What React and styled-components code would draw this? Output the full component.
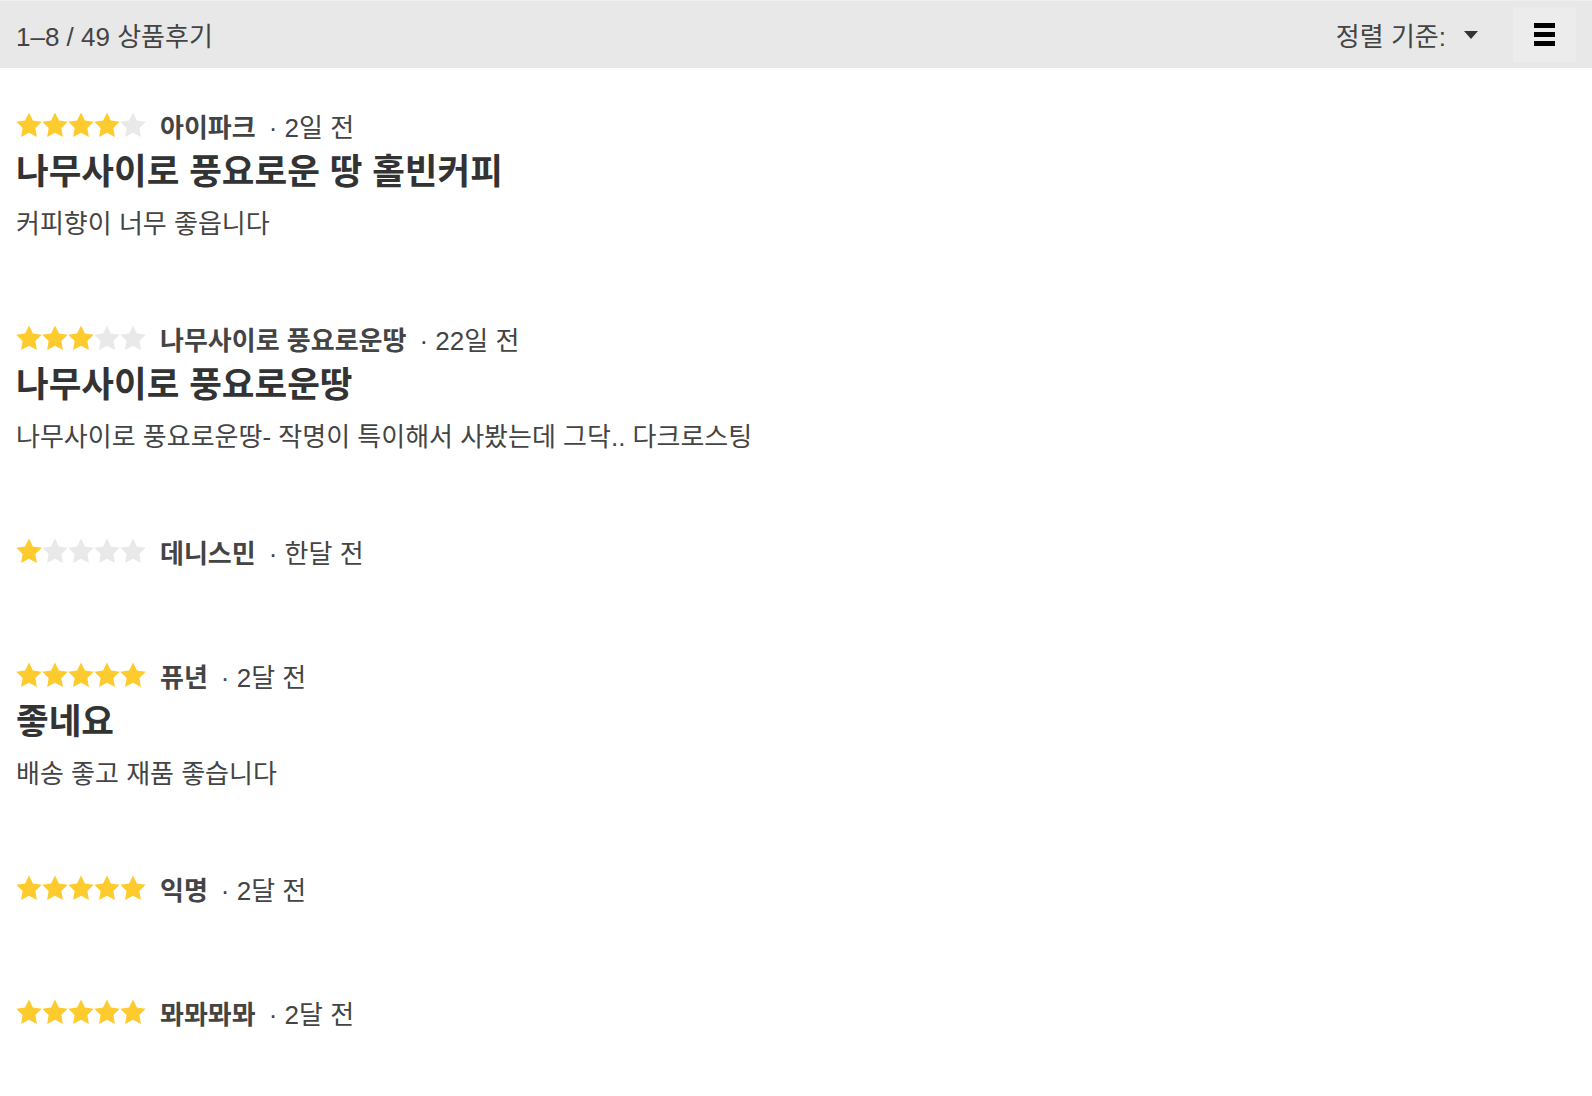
import styled, { createGlobalStyle } from 'styled-components'

const GlobalStyle = createGlobalStyle`
  body {
    margin: 0;
    background: #fff;
    font-family: "Liberation Sans", "Noto Sans CJK KR", sans-serif;
    color: #444;
  }
`

const reviews = [
  { id: 1, rating: 4, author: '아이파크', when: '2일 전', title: '나무사이로 풍요로운 땅 홀빈커피', body: '커피향이 너무 좋읍니다' },
  { id: 2, rating: 3, author: '나무사이로 풍요로운땅', when: '22일 전', title: '나무사이로 풍요로운땅', body: '나무사이로 풍요로운땅- 작명이 특이해서 사봤는데 그닥.. 다크로스팅' },
  { id: 3, rating: 1, author: '데니스민', when: '한달 전' },
  { id: 4, rating: 5, author: '퓨년', when: '2달 전', title: '좋네요', body: '배송 좋고 재품 좋습니다' },
  { id: 5, rating: 5, author: '익명', when: '2달 전' },
  { id: 6, rating: 5, author: '뫄뫄뫄뫄', when: '2달 전' },
]

function Star({ on }) {
  return (
    <StarIcon viewBox="1.4 1.2 21.2 21.2" $on={on}>
      <path d="M12 1.6l3.2 6.6 7.2 1-5.2 5.1 1.25 7.2L12 18.1l-6.45 3.4 1.25-7.2L1.6 9.2l7.2-1z" />
    </StarIcon>
  )
}

export default function App() {
  return (
    <>
      <GlobalStyle />
      <Toolbar>
        <Count>1–8 / 49 상품후기</Count>
        <Sort>
          정렬 기준:
          <Caret />
        </Sort>
        <MenuButton>
          <span />
          <span />
          <span />
        </MenuButton>
      </Toolbar>
      <List>
        {reviews.map(r => (
          <Review key={r.id}>
            <Meta>
              <Stars>
                {[1, 2, 3, 4, 5].map(n => <Star key={n} on={n <= r.rating} />)}
              </Stars>
              <Author>{r.author}</Author>
              <When>· {r.when}</When>
            </Meta>
            {r.title && <Title>{r.title}</Title>}
            {r.body && <Body>{r.body}</Body>}
          </Review>
        ))}
      </List>
    </>
  )
}

const Toolbar = styled.div`
  height: 68px;
  box-sizing: border-box;
  background: #e8e8e8;
  border-top: 1px solid #efefef;
  display: flex;
  align-items: center;
  padding: 0 16px;
`

const Count = styled.div`
  flex: 1;
  font-size: 26px;
  color: #444;
`

const Sort = styled.div`
  display: flex;
  align-items: center;
  font-size: 26px;
  color: #444;
  margin-right: 35px;
`

const Caret = styled.span`
  margin-left: 18px;
  width: 0;
  height: 0;
  border-left: 7px solid transparent;
  border-right: 7px solid transparent;
  border-top: 8px solid #333;
`

const MenuButton = styled.div`
  width: 63px;
  height: 55px;
  background: #ececec;
  display: flex;
  flex-direction: column;
  align-items: center;
  justify-content: center;
  gap: 4px;

  span {
    display: block;
    width: 21px;
    height: 5px;
    background: #000;
  }
`

const List = styled.div`
  padding: 0 16px;
`

const Review = styled.div`
  padding: 32px 0 42px;
`

const Meta = styled.div`
  height: 50px;
  display: flex;
  align-items: center;
  font-size: 26px;
`

const Stars = styled.div`
  display: flex;
  margin-right: 14px;
`

const StarIcon = styled.svg`
  width: 26px;
  height: 26px;
  fill: ${p => (p.$on ? '#fecb2f' : '#e9e9e9')};
`

const Author = styled.span`
  font-weight: bold;
  color: #444;
  margin-right: 13px;
`

const When = styled.span`
  color: #444;
`

const Title = styled.h2`
  margin: 2px 0 0;
  font-size: 35.5px;
  line-height: 40px;
  font-weight: bold;
  color: #333;
`

const Body = styled.p`
  margin: 17px 0 0;
  font-size: 26px;
  line-height: 30px;
  color: #444;
`
